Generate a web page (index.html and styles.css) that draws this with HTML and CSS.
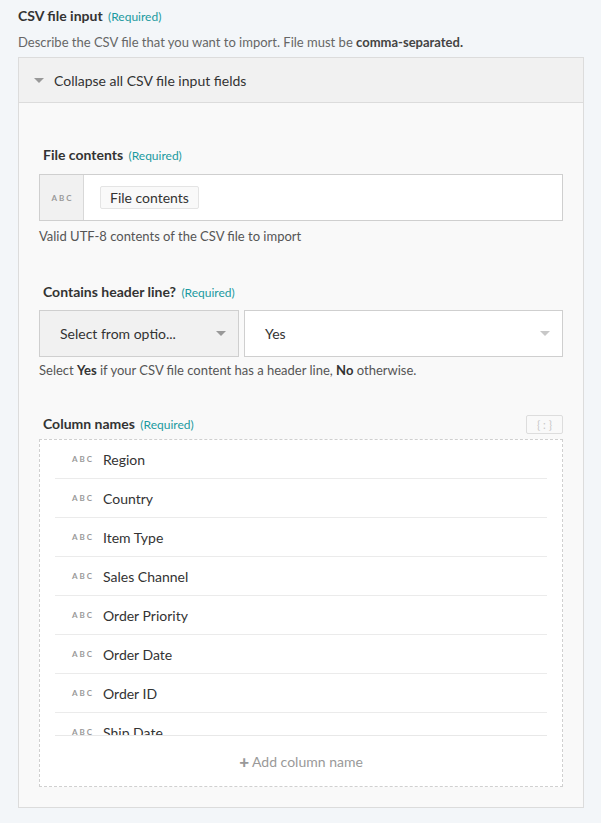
FILE: index.html
```html
<!DOCTYPE html>
<html>
<head>
<meta charset="utf-8">
<link rel="stylesheet" href="styles.css">
</head>
<body>
<div class="page">
  <div class="title">CSV file input <span class="req">(Required)</span></div>
  <div class="desc">Describe the CSV file that you want to import. File must be <b>comma-separated.</b></div>
  <div class="panel">
    <div class="panel-head"><span class="caret"></span>Collapse all CSV file input fields</div>
    <div class="panel-body">
      <div class="field f1">
        <div class="label">File contents <span class="req">(Required)</span></div>
        <div class="input">
          <div class="type">ABC</div>
          <div class="input-main"><span class="pill">File contents</span></div>
        </div>
        <div class="help">Valid UTF-8 contents of the CSV file to import</div>
      </div>
      <div class="field f2">
        <div class="label">Contains header line? <span class="req">(Required)</span></div>
        <div class="selects">
          <div class="sel sel-left"><span>Select from optio...</span><span class="arrow"></span></div>
          <div class="sel sel-right"><span>Yes</span><span class="arrow light"></span></div>
        </div>
        <div class="help help2">Select <b>Yes</b> if your CSV file content has a header line, <b>No</b> otherwise.</div>
      </div>
      <div class="field f3">
        <div class="label-row">
          <div class="label">Column names <span class="req">(Required)</span></div>
          <div class="formula">{ : }</div>
        </div>
        <div class="list">
          <div class="rows">
            <div class="row"><span class="abc">ABC</span>Region</div>
            <div class="row"><span class="abc">ABC</span>Country</div>
            <div class="row"><span class="abc">ABC</span>Item Type</div>
            <div class="row"><span class="abc">ABC</span>Sales Channel</div>
            <div class="row"><span class="abc">ABC</span>Order Priority</div>
            <div class="row"><span class="abc">ABC</span>Order Date</div>
            <div class="row"><span class="abc">ABC</span>Order ID</div>
            <div class="row"><span class="abc">ABC</span>Ship Date</div>
          </div>
          <div class="add"><span class="plus">+</span>Add column name</div>
        </div>
      </div>
    </div>
  </div>
</div>
</body>
</html>
```

FILE: styles.css
```css
* { box-sizing: border-box; }
html, body { margin: 0; padding: 0; }
body {
  background: #f3f6f9;
  font-family: Lato, "Open Sans", sans-serif;
  color: #333;
  width: 601px;
  height: 823px;
  overflow: hidden;
}
.page { padding: 7px 18px 0 18px; }
.title { font-size: 14px; font-weight: 700; line-height: 18px; color: #333; }
.req { font-size: 12px; font-weight: 400; color: #1b9aa0; margin-left: 2px; }
.desc { margin-top: 7px; font-size: 13px; line-height: 18px; color: #666; }
.desc b { color: #444; }
.panel {
  margin-top: 6px;
  border: 1px solid #dcdcdc;
  background: #f9f9f9;
  width: 566px;
}
.panel-head {
  height: 45px;
  background: #f1f1f1;
  border-bottom: 1px solid #dcdcdc;
  display: flex;
  align-items: center;
  padding-left: 15px;
  font-size: 14px;
  color: #333;
}
.caret {
  width: 0; height: 0;
  border-left: 5px solid transparent;
  border-right: 5px solid transparent;
  border-top: 5px solid #999;
  margin-right: 10px;
}
.panel-body { padding: 43px 20px 20px 20px; }
.label { font-size: 14px; font-weight: 700; line-height: 18px; color: #333; padding-left: 4px; }
.field.f2 { margin-top: 39px; }
.field.f3 { margin-top: 37px; }
.input {
  margin-top: 9px;
  height: 47px;
  border: 1px solid #cfcfcf;
  background: #fff;
  display: flex;
}
.type {
  width: 44px;
  background: #f1f1f1;
  border-right: 1px solid #d8d8d8;
  font-size: 8px;
  font-weight: 700;
  letter-spacing: 2px;
  color: #999;
  display: flex;
  align-items: center;
  justify-content: center;
  padding-left: 2px;
}
.input-main { display: flex; align-items: center; padding-left: 16px; }
.pill {
  border: 1px solid #e4e4e4;
  background: #f9f9f9;
  border-radius: 2px;
  font-size: 14px;
  line-height: 21px;
  padding: 0 9px;
  color: #333;
}
.help { margin-top: 7px; font-size: 13px; line-height: 16px; color: #555; }
.help2 { margin-top: 5px; }
.help b { color: #333; }
.selects { margin-top: 8px; display: flex; gap: 5px; height: 47px; }
.sel {
  border: 1px solid #cfcfcf;
  display: flex;
  align-items: center;
  justify-content: space-between;
  font-size: 14px;
  color: #333;
}
.sel-left { width: 200px; background: #f1f1f1; padding: 0 12px 0 20px; }
.sel-right { flex: 1; background: #fff; padding: 0 12px 0 20px; }
.arrow {
  width: 0; height: 0;
  border-left: 5px solid transparent;
  border-right: 5px solid transparent;
  border-top: 5px solid #999;
}
.arrow.light { border-top-color: #c8c8c8; }
.label-row { display: flex; justify-content: space-between; align-items: center; }
.formula {
  width: 37px;
  height: 19px;
  border: 1px solid #ddd;
  border-radius: 2px;
  font-size: 11px;
  color: #c8c8c8;
  display: flex;
  align-items: center;
  justify-content: center;
  white-space: pre;
}
.list {
  margin-top: 5px;
  border: 1px dashed #d0d0d0;
  background: #fff;
  height: 348px;
  padding: 0 15px;
}
.rows {
  height: 296px;
  overflow: hidden;
  border-bottom: 1px solid #e8e8e8;
}
.row {
  height: 39px;
  border-bottom: 1px solid #ebebeb;
  display: flex;
  align-items: center;
  font-size: 14px;
  color: #333;
}
.abc {
  width: 48px;
  padding-left: 17px;
  font-size: 8px;
  font-weight: 700;
  letter-spacing: 2px;
  color: #999;
}
.add {
  height: 50px;
  display: flex;
  align-items: center;
  justify-content: center;
  font-size: 14px;
  color: #999;
}
.plus { font-weight: 900; font-size: 17px; margin-right: 3px; line-height: 1; }
```
